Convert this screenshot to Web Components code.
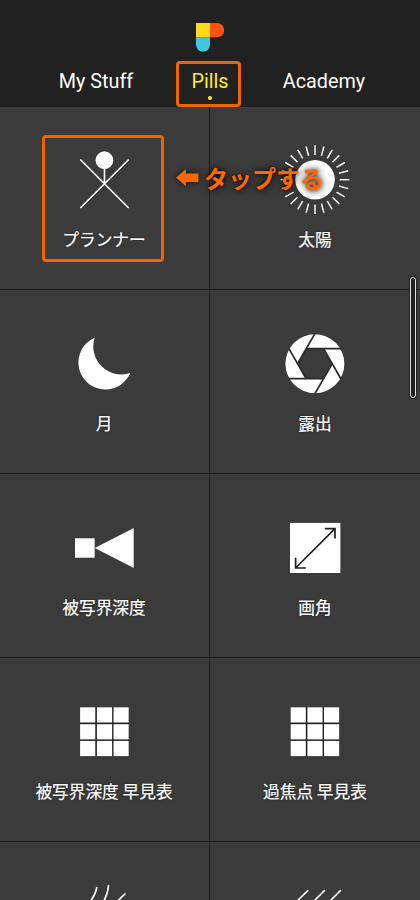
<!DOCTYPE html>
<html lang="ja">
<head>
<meta charset="utf-8">
<title>Pills</title>
<style>
html,body{margin:0;height:900px;overflow:hidden;background:#3b3b3b}
</style>
</head>
<body>
<pills-app></pills-app>
<script>
const define = (name, html, setup) => customElements.define(name, class extends HTMLElement {
  constructor() {
    super();
    const t = document.createElement('template');
    t.innerHTML = html;
    this.attachShadow({mode: 'open'}).appendChild(t.content.cloneNode(true));
  }
  connectedCallback() { if (setup) setup(this, this.shadowRoot); }
});

const turn = (n, cx, cy, item) => Array.from({length: n}, (_, i) =>
  `<g transform="translate(${cx} ${cy}) rotate(${i * 360 / n})">${item}</g>`).join('');
const cells = [15.3, 32.2, 48.9].map(y => [15.6, 32.4, 49].map(x =>
  `<rect x="${x}" y="${y}" width="15.2" height="15.2"/>`).join('')).join('');
const icons = {
  planner: '<path class="l" stroke-width="1.7" d="M15.8 19.5 64.2 68M64.2 19.5 15.8 68M40 28V44"/><circle cx="39.9" cy="20.2" r="8.9"/>',
  sun: '<circle cx="40" cy="39.7" r="19.8"/>' + turn(24, 40, 39.7, '<path class="l" stroke-width="1.5" d="M0-24.7V-34.4"/>'),
  moon: '<path d="M30.2 13.7A27 27 0 1 0 65.8 48.9A28 28 0 0 1 30.2 13.7Z"/>',
  aperture: '<circle cx="39.9" cy="39.7" r="29.5"/><path fill="#3b3b3b" d="M22.6 39.7 31.2 24.7H48.6L57.2 39.7 48.6 54.7H31.2Z"/>' +
    turn(6, 39.9, 39.7, '<path stroke="#2b2b2b" stroke-width="1.7" d="M-8.7-15H26"/>'),
  depth: '<path d="M10.5 30.2H30.2V49.8H10.5ZM30.2 40 69.2 20V60Z"/>',
  angle: '<rect x="15" y="14.9" width="50.4" height="50.1"/><path fill="none" stroke="#202020" stroke-width="1.7" d="M20.6 60 60 20.7M49.8 20.7H60V30.4M20.6 49.8V60H30.8"/>',
  table: '<path fill="#222" d="M15.6 15.3H64.2V64.1H15.6Z"/>' + cells,
  arcs: '<path class="l" stroke-width="1.7" stroke-linecap="round" d="M32.2 11.6Q31.5 18 24 28M44 9.6Q43.2 19 38 27M60.5 17.8 50 28"/>',
  rays: '<path class="l" stroke-width="1.6" stroke-linecap="round" d="M32.8 14.6 19 28M49.4 14.6 36 28M65.4 14.6 52 28"/>'
};

define('pill-icon', `<style>
:host{display:block;width:80px;height:80px}
svg{display:block;width:80px;height:80px;fill:#fff;filter:drop-shadow(0 0 .6px #1c1c1c)}
.l{stroke:#fff;fill:none}
</style><svg viewBox="0 0 80 80"><g></g></svg>`, (el, root) => {
  const g = root.querySelector('g');
  g.innerHTML = icons[el.getAttribute('name')];
  g.setAttribute('transform', `translate(${el.getAttribute('shift')} 0)`);
});

define('pill-tile', `<style>
:host{display:flex;flex-direction:column;align-items:center;box-sizing:border-box;padding-top:34px;
 background:#3b3b3b;border-bottom:1px solid #1f1f1f;position:relative;overflow:hidden}
:host(:nth-child(odd)){border-right:1px solid #1f1f1f;padding-right:1px}
:host(:nth-child(-n+2)){padding-top:33px}
:host([marked])::after{content:"";position:absolute;left:42px;top:28px;width:122px;height:127px;
 box-sizing:border-box;border:3px solid #f06400;border-radius:4px}
.label{margin-top:7px;font:16.7px/24px "Noto Sans CJK JP",sans-serif;color:#fff;white-space:nowrap;
 -webkit-text-stroke:.2px #fff;text-shadow:0 0 2px #1c1c1c}
</style><div class="icon"></div><div class="label"><slot></slot></div>`, (el, root) => {
  const shift = el.matches(':nth-child(odd)') ? .5 : 0;
  root.querySelector('.icon').innerHTML = `<pill-icon name="${el.getAttribute('icon')}" shift="${shift}"></pill-icon>`;
});

define('pill-logo', `<style>:host,svg{display:block;width:28px;height:29px}</style>
<svg viewBox="0 0 28 29"><path fill="#ffda1a" d="M0 0H14V14.3H0Z"/><path fill="#ff5212" d="M14 0H21A7.1 7.1 0 0 1 21 14.3H14Z"/><path fill="#42c5e4" d="M0 14.3H14V21.7A7 7 0 0 1 0 21.7Z"/></svg>`);

define('nav-tab', `<style>
:host{display:block;position:relative;text-align:center;color:#fff;font:19.8px/24px Roboto,sans-serif;white-space:nowrap;height:46px;padding-top:9px;box-sizing:border-box}
:host([active]){color:#ffee22}
:host([active])::before{content:"";position:absolute;left:23px;top:0;width:65px;height:46px;box-sizing:border-box;border:3px solid #f06400;border-radius:4px}
:host([active])::after{content:"";display:block;width:4.4px;height:4.4px;border-radius:50%;background:#ffee22;margin:1.8px auto 0}
</style><slot></slot>`);

define('top-bar', `<style>
:host{display:flex;flex-direction:column;align-items:center;box-sizing:border-box;height:107px;padding-top:23px;background:#212121;position:relative;z-index:1}
pill-logo{flex:none}
nav{display:grid;grid-template-columns:repeat(3,114px);margin-top:9px}
</style><pill-logo></pill-logo><nav><slot></slot></nav>`);

define('tap-hint', `<style>
:host{position:absolute;z-index:2;left:176px;top:161px;display:flex;align-items:center;gap:6px;height:34px;color:#ff6600;
 font:bold 24px/34px "Noto Sans CJK JP",sans-serif;white-space:nowrap;
 text-shadow:0 0 4px rgba(0,0,0,.75),1px 1px 8px rgba(0,0,0,.7)}
svg{display:block;width:22px;height:18px;overflow:visible;filter:drop-shadow(0 0 3px rgba(0,0,0,.75))}
</style><svg viewBox="0 0 22 18"><path fill="#ff6600" d="M0 8.6 9.8.3V4.6H22.4V13H9.8V17.2Z"/></svg><span><slot></slot></span>`);

define('scroll-thumb', `<style>
:host{position:absolute;z-index:2;left:410px;top:277px;width:6px;height:121px;box-sizing:border-box;border:1.5px solid #ddd;border-radius:3px;background:#202020;box-shadow:0 0 1px 1px #252525}
</style>`);

define('pills-app', `<style>
:host{display:block;position:relative;width:420px;height:900px;overflow:hidden}
main{display:grid;grid-template-columns:1fr 1fr;grid-template-rows:183px repeat(4,184px)}
</style>
<top-bar><nav-tab>My Stuff</nav-tab><nav-tab active>Pills</nav-tab><nav-tab>Academy</nav-tab></top-bar>
<main>
<pill-tile icon="planner" marked>プランナー</pill-tile><pill-tile icon="sun">太陽</pill-tile>
<pill-tile icon="moon">月</pill-tile><pill-tile icon="aperture">露出</pill-tile>
<pill-tile icon="depth">被写界深度</pill-tile><pill-tile icon="angle">画角</pill-tile>
<pill-tile icon="table">被写界深度 早見表</pill-tile><pill-tile icon="table">過焦点 早見表</pill-tile>
<pill-tile icon="arcs"></pill-tile><pill-tile icon="rays"></pill-tile>
</main>
<tap-hint>タップする</tap-hint><scroll-thumb></scroll-thumb>`);
</script>
</body>
</html>
